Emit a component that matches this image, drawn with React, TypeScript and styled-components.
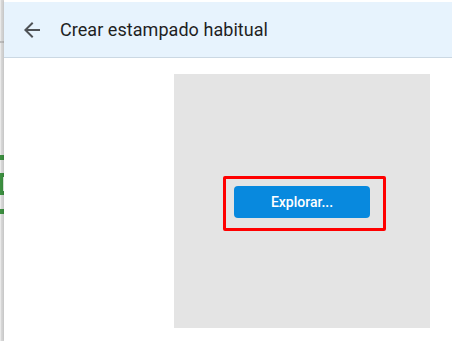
import React from 'react';
import styled, {createGlobalStyle} from 'styled-components';

const GlobalStyle = createGlobalStyle`
  html, body {
    margin: 0;
    padding: 0;
    background: #ffffff;
    font-family: Roboto, "Noto Sans", sans-serif;
  }
`

const Screen = styled.div`
  display: flex;
  width: 452px;
  height: 341px;
  overflow: hidden;
  background: #ffffff;
`

// strip of the window lying behind the dialog
const BackStrip = styled.div`
  width: 4px;
  flex-shrink: 0;
  display: flex;
  flex-direction: column;
  background: linear-gradient(to right, #e9e9e9 0, #e9e9e9 1px, #d7d7d7 1px, #dcdcdc 100%);
`

const StripLine = styled.div<{ $top: number }>`
  margin-top: ${({$top}) => $top}px;
  height: 2px;
  background: #bcbcbc;
`

const StripGreen = styled.div<{ $top: number, $height: number }>`
  margin-top: ${({$top}) => $top}px;
  height: ${({$height}) => $height}px;
  background: #3c8f40;
`

const StripBadge = styled.div`
  margin-top: 13px;
  height: 22px;
  background: #3c8f40;
  display: flex;
  align-items: center;
  justify-content: flex-end;
`

const BadgeMark = styled.div`
  width: 1px;
  height: 14px;
  background: #e8f2e8;
`

const Panel = styled.div`
  flex: 1;
  display: flex;
  flex-direction: column;
  padding-top: 2px;
  box-shadow: -1px 0 2px rgba(0, 0, 0, 0.12);
`

const Header = styled.div`
  height: 55px;
  display: flex;
  align-items: center;
  gap: 16px;
  padding-left: 16px;
  background: #e7f3fd;
  border-bottom: 1px solid #cbd8e3;
`

const BackButton = styled.div`
  width: 24px;
  height: 24px;
  display: flex;
  color: #4f5256;
`

const Title = styled.div`
  font-size: 18px;
  color: #1f1f1f;
  letter-spacing: 0.05px;
`

const Body = styled.div`
  flex: 1;
  padding: 16px 0 0 170px;
`

const DropArea = styled.div`
  position: relative;
  width: 256px;
  height: 254px;
  background: #e4e4e4;
  display: flex;
  align-items: center;
  justify-content: center;
`

const BrowseButton = styled.button`
  width: 136px;
  height: 32px;
  margin-top: 2px;
  border: none;
  border-radius: 4px;
  background: #0889de;
  color: #ffffff;
  font-family: Roboto, sans-serif;
  font-weight: 500;
  font-size: 14px;
  padding: 0;
  cursor: pointer;
`

// annotation frame over the button
const Highlight = styled.div`
  position: absolute;
  left: 49px;
  top: 102px;
  width: 163px;
  height: 55px;
  box-sizing: border-box;
  border: 3px solid #ff0000;
  border-radius: 2px;
  pointer-events: none;
`

export default function App() {
  return (
    <>
      <GlobalStyle/>
      <Screen>
        <BackStrip>
          <StripLine $top={41}/>
          <StripGreen $top={112} $height={5}/>
          <StripBadge><BadgeMark/></StripBadge>
          <StripGreen $top={14} $height={5}/>
        </BackStrip>
        <Panel>
          <Header>
            <BackButton>
              <svg width="24" height="24" viewBox="0 0 24 24" fill="currentColor">
                <path d="M20 11H7.83l5.59-5.59L12 4l-8 8 8 8 1.41-1.41L7.83 13H20v-2z"/>
              </svg>
            </BackButton>
            <Title>Crear estampado habitual</Title>
          </Header>
          <Body>
            <DropArea>
              <BrowseButton>Explorar...</BrowseButton>
              <Highlight/>
            </DropArea>
          </Body>
        </Panel>
      </Screen>
    </>
  );
}
